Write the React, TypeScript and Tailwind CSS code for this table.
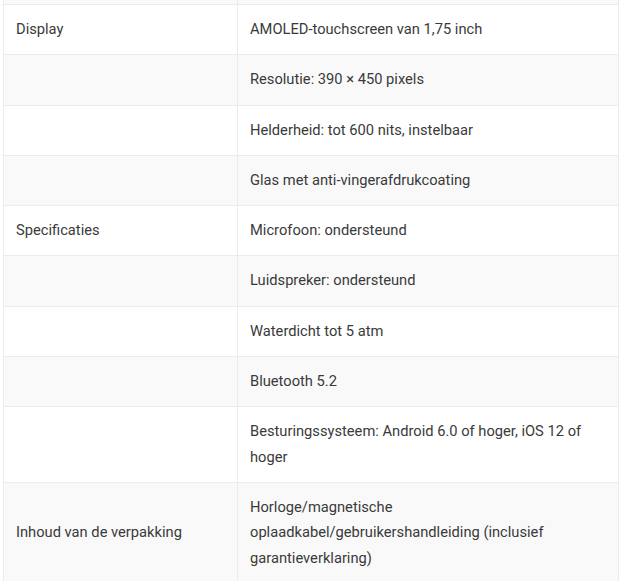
import React from "react";

type Row = { label: string; value: string };

const rows: Row[] = [
  { label: "Display", value: "AMOLED-touchscreen van 1,75 inch" },
  { label: "", value: "Resolutie: 390 × 450 pixels" },
  { label: "", value: "Helderheid: tot 600 nits, instelbaar" },
  { label: "", value: "Glas met anti-vingerafdrukcoating" },
  { label: "Specificaties", value: "Microfoon: ondersteund" },
  { label: "", value: "Luidspreker: ondersteund" },
  { label: "", value: "Waterdicht tot 5 atm" },
  { label: "", value: "Bluetooth 5.2" },
  { label: "", value: "Besturingssysteem: Android 6.0 of hoger, iOS 12 of hoger" },
  {
    label: "Inhoud van de verpakking",
    value: "Horloge/magnetische oplaadkabel/gebruikershandleiding (inclusief garantieverklaring)",
  },
];

export default function App() {
  return (
    <div className="w-[620px] h-[581px] overflow-hidden bg-white pl-[3px] pr-[1px] font-['Roboto',sans-serif] text-[14.7px] leading-[25.3px] text-[#3a3a3a]">
      <div className="h-[4px] bg-[#f9f9f9] border-x border-[#ebebeb] flex">
        <div className="w-[234px] border-r border-[#ebebeb]" />
      </div>
      <table className="w-full border-collapse table-fixed">
        <colgroup>
          <col className="w-[234px]" />
          <col />
        </colgroup>
        <tbody>
          {rows.map((row, i) => (
            <tr key={i} className={i % 2 === 1 ? "bg-[#f9f9f9]" : "bg-white"}>
              <td className="border border-[#ebebeb] px-3 py-3 align-middle">{row.label}</td>
              <td className="border border-[#ebebeb] px-3 py-3 align-middle">{row.value}</td>
            </tr>
          ))}
        </tbody>
      </table>
    </div>
  );
}
